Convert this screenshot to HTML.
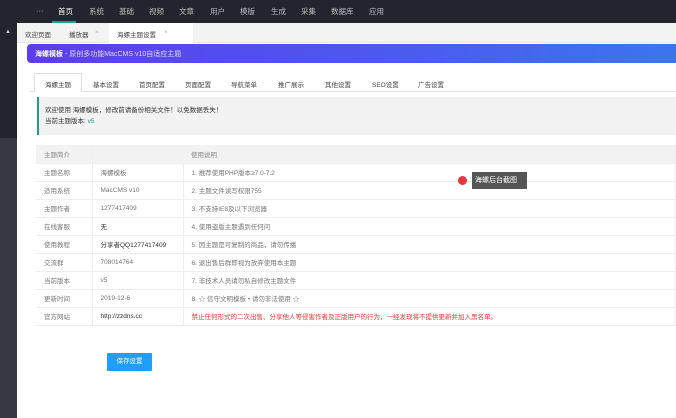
<!DOCTYPE html><html><head><meta charset="utf-8"><style>
*{margin:0;padding:0;box-sizing:border-box}
body{width:676px;height:418px;overflow:hidden;background:#fff;font-family:"Liberation Sans","Noto Sans CJK SC",sans-serif;font-size:7px;color:#333;position:relative}
.top{position:absolute;left:0;top:0;width:676px;height:23px;background:#22252d}
.top span{position:absolute;top:6px;color:#bbb;font-size:7.5px}
.side{position:absolute;left:0;top:23px;width:17px;height:395px;background:#363942}
.tabs{position:absolute;left:17px;top:23px;width:659px;height:20px;background:#f3f3f3;border-bottom:1px solid #e6e6e6}
.tabs span{position:absolute;top:6px;font-size:6.5px;color:#444}
.banner{position:absolute;left:27px;top:44px;width:649px;height:19px;border-radius:4px 0 0 4px;background:linear-gradient(90deg,#5d3cf0,#4a5cf0 60%,#3d74ee);color:#fff;font-size:7px;padding:5px 0 0 8px}
.t2{position:absolute;top:79px;font-size:6.5px;color:#444}
.tabline{position:absolute;left:30px;top:91px;width:646px;height:1px;background:#e2e2e2}
.alert{position:absolute;left:37px;top:97px;width:639px;height:38px;background:#f2f2f2;border-left:2px solid #1e9e85;padding:8px 0 0 6px;font-size:6.5px;line-height:11px}
table{position:absolute;left:36px;top:145px;width:640px;border-collapse:collapse;font-size:6.5px}
td{height:18px;border-bottom:1px solid #eee;border-right:1px solid #eee;padding-left:8px;color:#777}
tr:first-child td{background:#f2f2f2;color:#888}
.btn{position:absolute;left:107px;top:353px;width:45px;height:18px;background:#1e9fff;color:#fff;font-size:6.5px;text-align:center;line-height:18px;border-radius:1px}
.tip{position:absolute;left:472px;top:172px;width:55px;height:17px;background:#555;color:#fff;font-size:7px;line-height:17px;padding-left:3px}
.dot{position:absolute;left:458px;top:176px;width:9px;height:9px;border-radius:50%;background:#e5383b}
</style></head><body>
<div class="top">
<span style="left:36px">···</span><span style="left:58px;color:#fff">首页</span><span style="left:89px">系统</span><span style="left:119px">基础</span><span style="left:149px">视频</span><span style="left:179px">文章</span><span style="left:210px">用户</span><span style="left:240px">模版</span><span style="left:271px">生成</span><span style="left:301px">采集</span><span style="left:331px">数据库</span><span style="left:369px">应用</span>
<div style="position:absolute;left:52px;top:21px;width:24px;height:2px;background:#1e9e85"></div>
</div>
<div class="side"><div style="position:absolute;left:0;top:0;width:17px;height:115px;background:#22252d"></div><span style="position:absolute;left:5px;top:6px;color:#ccc;font-size:6px">▲</span></div>
<div class="tabs"><span style="left:8px">欢迎页面</span><span style="left:52px">播放器</span><span style="left:78px;color:#bbb">×</span><div style="position:absolute;left:92px;top:0;width:84px;height:20px;background:#fff"></div><span style="left:100px">海螺主题设置</span><span style="left:147px;color:#bbb">×</span></div>
<div class="banner"><b>海螺模板</b> <span style="opacity:.8">- 原创多功能MacCMS v10自适应主题</span></div>
<div style="position:absolute;left:34px;top:73px;width:48px;height:19px;border:1px solid #e2e2e2;border-bottom:1px solid #fff;background:#fff;z-index:2"></div>
<span class="t2" style="left:45px;z-index:3">海螺主题</span><span class="t2" style="left:93px">基本设置</span><span class="t2" style="left:139px">首页配置</span><span class="t2" style="left:185px">页面配置</span><span class="t2" style="left:231px">导航菜单</span><span class="t2" style="left:278px">推广展示</span><span class="t2" style="left:325px">其他设置</span><span class="t2" style="left:372px">SEO设置</span><span class="t2" style="left:418px">广告设置</span>
<div class="tabline"></div>
<div class="alert">欢迎使用 海螺模板，修改前请备份相关文件！以免数据丢失！<br>当前主题版本: <span style="color:#1e9e85">v5</span></div>
<table>
<tr><td style="width:56px">主题简介</td><td style="width:91px;border-right:none"></td><td>使用说明</td></tr>
<tr><td>主题名称</td><td>海螺模板</td><td>1. 推荐使用PHP版本≥7.0-7.2</td></tr>
<tr><td>适用系统</td><td>MacCMS v10</td><td>2. 主题文件读写权限755</td></tr>
<tr><td>主题作者</td><td>1277417409</td><td>3. 不支持IE8及以下浏览器</td></tr>
<tr><td>在线客服</td><td style="color:#333">无</td><td>4. 使用盗版主题遇到任何问</td></tr>
<tr><td>使用教程</td><td style="color:#333">分享者QQ1277417409</td><td>5. 因主题是可复制的商品，请勿传播</td></tr>
<tr><td>交流群</td><td>708014764</td><td>6. 退出售后群即视为放弃使用本主题</td></tr>
<tr><td>当前版本</td><td>v5</td><td>7. 非技术人员请勿私自修改主题文件</td></tr>
<tr><td>更新时间</td><td>2019-12-6</td><td>8. ☆ 信守文明模板 • 请勿非法使用 ☆</td></tr>
<tr><td>官方网站</td><td style="color:#333">http://zzdns.cc</td><td style="color:#e33">禁止任何形式的二次出售、分享他人等侵害作者及正版用户的行为，一经发现将不提供更新并加入黑名单。</td></tr>
</table>
<div class="btn">保存设置</div>
<div class="dot"></div><div class="tip">海螺后台截图</div>
</body></html>
